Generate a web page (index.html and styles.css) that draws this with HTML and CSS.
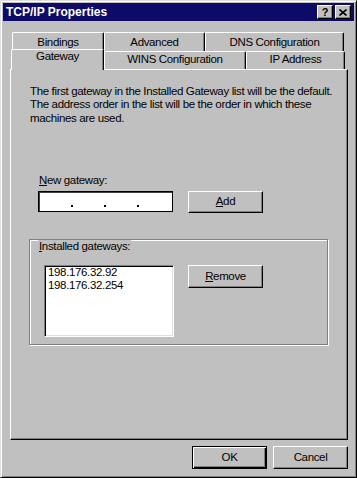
FILE: index.html
```html
<!doctype html>
<html>
<head>
<meta charset="utf-8">
<link rel="stylesheet" href="styles.css">
<title>TCP/IP Properties</title>
</head>
<body>
<div class="dialog">
  <div class="titlebar">
    <span class="title">TCP/IP Properties</span>
    <span class="caption-buttons">
      <span class="caption-btn">?</span>
      <span class="caption-btn"><svg width="8" height="7" viewBox="0 0 8 7"><path d="M0.5 0.5L7.5 6.5M7.5 0.5L0.5 6.5" stroke="#000" stroke-width="1.6"/></svg></span>
    </span>
  </div>
  <div class="content">
    <div class="tabs">
      <div class="tab-row back">
        <span class="tab tab-bindings">Bindings</span>
        <span class="tab tab-advanced">Advanced</span>
        <span class="tab tab-dns">DNS Configuration</span>
      </div>
      <div class="tab-row front">
        <span class="tab tab-gateway active">Gateway</span>
        <span class="tab tab-wins">WINS Configuration</span>
        <span class="tab tab-ip">IP Address</span>
      </div>
    </div>
    <div class="panel">
      <p class="intro">The first gateway in the Installed Gateway list will be the default.<br>The address order in the list will be the order in which these<br>machines are used.</p>
      <div class="field-label"><u>N</u>ew gateway:</div>
      <div class="field-row">
        <div class="ip-field"><span class="dot"></span><span class="dot"></span><span class="dot"></span></div>
        <button class="btn"><u>A</u>dd</button>
      </div>
      <div class="group">
        <div class="group-title"><u>I</u>nstalled gateways:</div>
        <div class="group-row">
          <div class="listbox">
            <div>198.176.32.92</div>
            <div>198.176.32.254</div>
          </div>
          <button class="btn"><u>R</u>emove</button>
        </div>
      </div>
    </div>
    <div class="actions">
      <button class="btn default">OK</button>
      <button class="btn">Cancel</button>
    </div>
  </div>
</div>
</body>
</html>
```

FILE: styles.css
```css
body {
    margin: 0;
    background-color: #c0c0c0;
}
.dialog {
    width: 357px;
    height: 478px;
    box-sizing: border-box;
    display: flex;
    flex-direction: column;
    padding: 2px;
    background-color: #c0c0c0;
    border: 1px solid;
    border-color: #dfdfdf #000 #000 #dfdfdf;
    box-shadow: inset 1px 1px #fff, inset -1px -1px #808080;
    font-family: "Liberation Sans", Arial, sans-serif;
    font-size: 11.5px;
    letter-spacing: -0.35px;
    line-height: 13px;
    color: #000;
}
.titlebar {
    height: 18px;
    flex: none;
    display: flex;
    align-items: center;
    justify-content: space-between;
    padding: 0 3px 0 3px;
    background-color: #0e0a68;
}
.title {
    font-weight: bold;
    font-size: 12px;
    letter-spacing: 0;
    color: #fff;
}
.caption-buttons {
    display: flex;
    gap: 2px;
}
.caption-btn {
    width: 16px;
    height: 14px;
    box-sizing: border-box;
    display: flex;
    align-items: center;
    justify-content: center;
    background-color: #c0c0c0;
    border: 1px solid;
    border-color: #fff #000 #000 #fff;
    box-shadow: inset -1px -1px #808080;
    font-weight: bold;
    font-size: 11px;
    letter-spacing: 0;
}
.content {
    flex: 1;
    display: flex;
    flex-direction: column;
    padding: 0 6px 0 7px;
}

/* tabs */
.tabs {
    margin-top: 11px;
}
.tab-row {
    display: flex;
    margin-left: 2px;
}
.tab-row.back {
    height: 19px;
}
.tab-row.front {
    height: 18px;
}
.tab {
    box-sizing: border-box;
    text-align: center;
    background-color: #c0c0c0;
    border-top: 1px solid #fff;
    border-left: 1px solid #fff;
    border-right: 1px solid #000;
    border-radius: 2px 2px 0 0;
    box-shadow: inset -1px 0 #808080;
}
.back .tab {
    padding-top: 3px;
}
.front .tab {
    padding-top: 1px;
}
.tab-bindings { width: 92px; }
.tab-advanced { width: 101px; }
.tab-dns { width: 139px; }
.tab-gateway { width: 93px; }
.tab-wins { width: 142px; }
.tab-ip { width: 99px; }
.front .tab.active {
    position: relative;
    z-index: 1;
    margin: -2px 0 -1px -1px;
    padding-top: 0;
}

/* page */
.panel {
    height: 371px;
    flex: none;
    box-sizing: border-box;
    padding: 15px 0 0 0;
    border: 1px solid;
    border-color: #fff #000 #000 #fff;
    box-shadow: inset -1px -1px #808080;
}
.intro {
    margin: 0;
    padding-left: 19px;
    line-height: 13.3px;
}
.field-label {
    margin: 49px 0 0 28px;
}
.field-row {
    display: flex;
    gap: 15px;
    margin: 4px 0 0 27px;
}
.ip-field {
    width: 135px;
    height: 21px;
    box-sizing: border-box;
    display: flex;
    align-items: flex-end;
    gap: 31px;
    padding: 0 0 4px 32px;
    background-color: #fff;
    border: 1px solid #000;
    box-shadow: inset 1px 1px #404040;
}
.dot {
    width: 2px;
    height: 2px;
    background-color: #000;
}
.btn {
    width: 75px;
    height: 22px;
    box-sizing: border-box;
    padding: 0;
    font: inherit;
    letter-spacing: inherit;
    color: #000;
    background-color: #c0c0c0;
    border: 1px solid;
    border-color: #fff #000 #000 #fff;
    box-shadow: inset -1px -1px #808080;
}
.btn.default {
    border-color: #000;
    box-shadow: inset 1px 1px #fff, inset -1px -1px #000, inset -2px -2px #808080;
}
.group {
    margin: 26px 0 0 18px;
    width: 299px;
    height: 106px;
    box-sizing: border-box;
    padding: 0 0 0 14px;
    border: 1px solid #808080;
    box-shadow: inset 1px 1px #fff, 1px 1px #fff;
}
.group-title {
    display: inline-block;
    margin: -9px 0 0 -6px;
    padding: 0 1px;
    background-color: #c0c0c0;
}
.group-row {
    display: flex;
    align-items: flex-start;
    gap: 14px;
    margin-top: 12px;
}
.group-row .btn {
    height: 23px;
}
.listbox {
    width: 130px;
    height: 72px;
    box-sizing: border-box;
    padding: 0 3px;
    line-height: 13.3px;
    background-color: #fff;
    border: 1px solid;
    border-color: #808080 #fff #fff #808080;
    box-shadow: inset 1px 1px #000, inset -1px -1px #dfdfdf;
}
.actions {
    display: flex;
    justify-content: flex-end;
    gap: 6px;
    margin-top: 6px;
}
.actions .btn {
    height: 23px;
}
```
